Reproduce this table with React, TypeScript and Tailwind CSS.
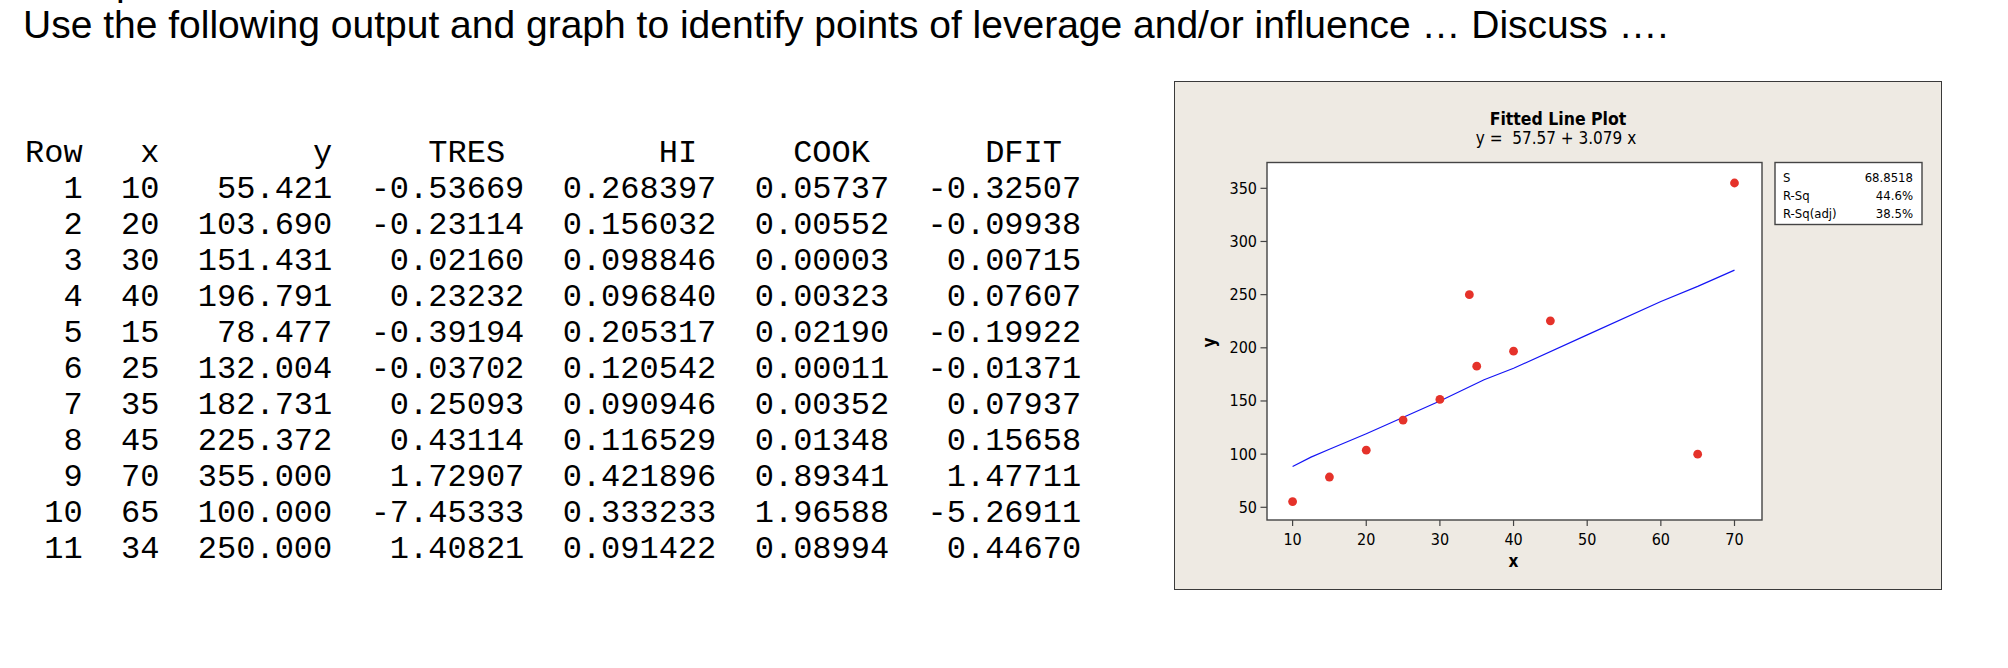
import React from "react";

const rows: [number, number, string, string, string, string, string][] = [
  [1, 10, "55.421", "-0.53669", "0.268397", "0.05737", "-0.32507"],
  [2, 20, "103.690", "-0.23114", "0.156032", "0.00552", "-0.09938"],
  [3, 30, "151.431", "0.02160", "0.098846", "0.00003", "0.00715"],
  [4, 40, "196.791", "0.23232", "0.096840", "0.00323", "0.07607"],
  [5, 15, "78.477", "-0.39194", "0.205317", "0.02190", "-0.19922"],
  [6, 25, "132.004", "-0.03702", "0.120542", "0.00011", "-0.01371"],
  [7, 35, "182.731", "0.25093", "0.090946", "0.00352", "0.07937"],
  [8, 45, "225.372", "0.43114", "0.116529", "0.01348", "0.15658"],
  [9, 70, "355.000", "1.72907", "0.421896", "0.89341", "1.47711"],
  [10, 65, "100.000", "-7.45333", "0.333233", "1.96588", "-5.26911"],
  [11, 34, "250.000", "1.40821", "0.091422", "0.08994", "0.44670"],
];

const header = "Row   x        y     TRES        HI     COOK      DFIT";

const line = (r: (typeof rows)[number]) =>
  String(r[0]).padStart(3) +
  "  " +
  String(r[1]).padStart(2) +
  "  " +
  r[2].padStart(7) +
  "  " +
  r[3].padStart(8) +
  "  " +
  r[4].padStart(8) +
  "  " +
  r[5].padStart(7) +
  "  " +
  r[6].padStart(8);

// plot mapping (svg coords inside the chart box)
const X = (v: number) => 117.6 + (v - 10) * 7.365;
const Y = (v: number) => 425.3 - (v - 50) * 1.0633;

const fitPts = [
  [10, 0], [12.5, 1.2], [15, 0.8], [20, 0], [30, 0], [36, 1.6], [40, 0], [50, 0.6], [60, 1.2], [65, 0], [70, 0],
]
  .map(([x, d]) => `${X(x).toFixed(1)},${Y(57.57 + 3.079 * x + d).toFixed(1)}`)
  .join(" ");

const chartFont = "'DejaVu Sans Condensed', 'DejaVu Sans', sans-serif";

const FittedLinePlot = () => (
  <svg width={766} height={507} viewBox="0 0 766 507" fontFamily={chartFont} fontStretch="condensed">
    <text x={383} y={43} textAnchor="middle" fontSize={17.5} fontWeight="bold" fill="#000">
      Fitted Line Plot
    </text>
    <text x={381} y={62} textAnchor="middle" fontSize={17} fill="#000" style={{ whiteSpace: "pre" }}>
      {"y =  57.57 + 3.079 x"}
    </text>

    {/* plot area */}
    <rect x={92} y={80.5} width={495} height={357.5} fill="#fff" stroke="#444" strokeWidth={1.4} />

    {/* y ticks */}
    {[50, 100, 150, 200, 250, 300, 350].map((v) => (
      <g key={v}>
        <line x1={85.5} x2={92} y1={Y(v)} y2={Y(v)} stroke="#444" strokeWidth={1.2} />
        <text x={82} y={Y(v) + 5.5} textAnchor="end" fontSize={16} fill="#000">
          {v}
        </text>
      </g>
    ))}

    {/* x ticks */}
    {[10, 20, 30, 40, 50, 60, 70].map((v) => (
      <g key={v}>
        <line x1={X(v)} x2={X(v)} y1={438} y2={444} stroke="#444" strokeWidth={1.2} />
        <text x={X(v)} y={463} textAnchor="middle" fontSize={16} fill="#000">
          {v}
        </text>
      </g>
    ))}

    <text x={338.5} y={485} textAnchor="middle" fontSize={17} fontWeight="bold" fill="#000">
      x
    </text>
    <text
      x={34}
      y={260.5}
      textAnchor="middle"
      fontSize={17}
      fontWeight="bold"
      fill="#000"
      dominantBaseline="central"
      transform="rotate(-90 34 260.5)"
    >
      y
    </text>

    {/* fitted line */}
    <polyline points={fitPts} fill="none" stroke="#1414f5" strokeWidth={1.2} />

    {/* data */}
    {rows.map((r) => (
      <circle key={r[0]} cx={X(r[1])} cy={Y(parseFloat(r[2]))} r={4.4} fill="#e5322a" />
    ))}

    {/* summary box */}
    <rect x={600} y={80.5} width={147} height={62} fill="#fff" stroke="#444" strokeWidth={1.4} />
    {[
      ["S", "68.8518"],
      ["R-Sq", "44.6%"],
      ["R-Sq(adj)", "38.5%"],
    ].map(([k, v], i) => (
      <g key={k} fontSize={13} fill="#000">
        <text x={608} y={99.7 + i * 18}>{k}</text>
        <text x={738} y={99.7 + i * 18} textAnchor="end">
          {v}
        </text>
      </g>
    ))}
  </svg>
);

export default function App() {
  return (
    <div className="w-[2008px] h-[668px] overflow-hidden bg-white text-black font-['Liberation_Sans',Arial,sans-serif]">
      {/* tail of the previous line, cut by the top edge */}
      <div className="h-[3px] overflow-hidden">
        <div className="-mt-[40px] pl-[116px] text-[39px] leading-[44px]">p</div>
      </div>

      <h1 className="pl-[23px] text-[39px] leading-[44px] font-normal whitespace-nowrap">
        Use the following output and graph to identify points of leverage and/or influence … Discuss ….
      </h1>

      <div className="flex items-start">
        <pre className="w-[1174px] shrink-0 mt-[89px] pl-[25px] font-['Liberation_Mono','Courier_New',monospace] text-[32px] leading-[36px]">
          {[header, ...rows.map(line)].join("\n")}
        </pre>

        <div className="mt-[34px] w-[768px] h-[509px] shrink-0 border border-[#3a3a3a] bg-[#eeeae3]">
          <FittedLinePlot />
        </div>
      </div>
    </div>
  );
}
